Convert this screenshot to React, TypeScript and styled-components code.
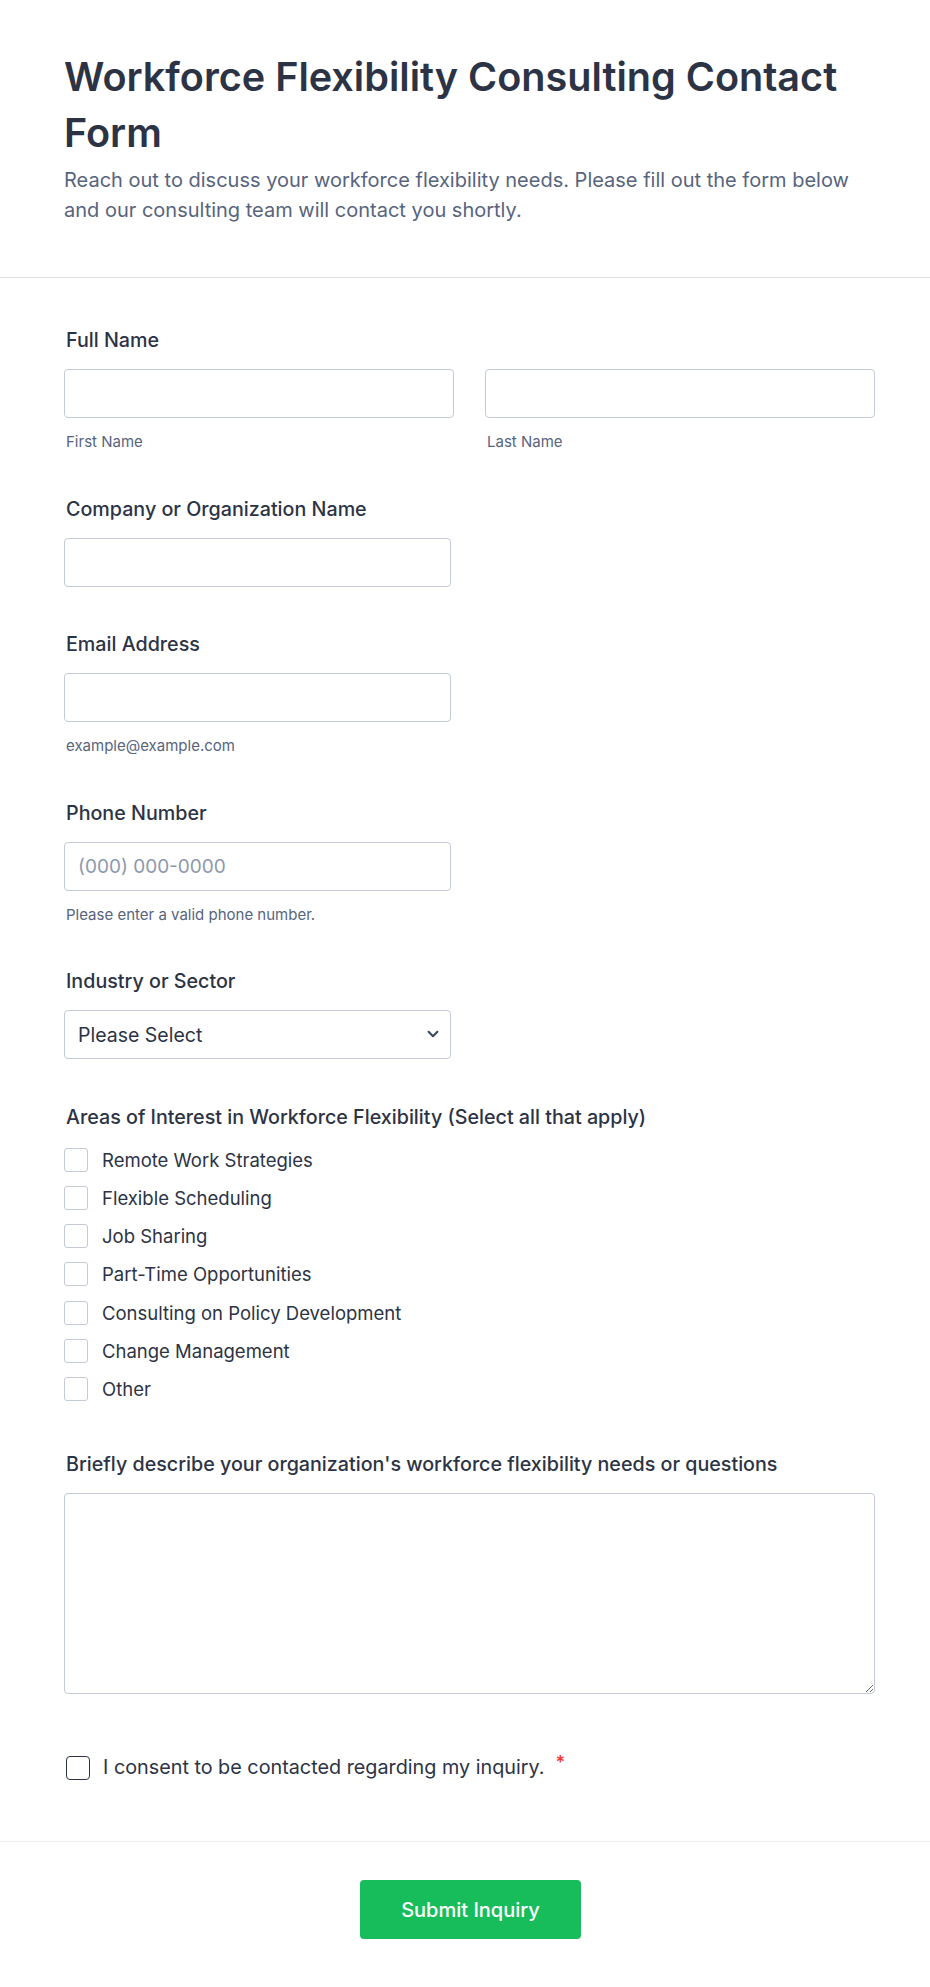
import styled, { createGlobalStyle } from 'styled-components'

const GlobalStyle = createGlobalStyle`
	* {
		box-sizing: border-box;
	}

	body {
		margin: 0;
		background: #ffffff;
		font-family: Inter, 'Noto Sans', sans-serif;
		color: #2c3345;
	}
`

const Page = styled.div`
	width: 930px;
	background: #ffffff;
`

const Header = styled.header`
	padding: 49px 55px 52px 64px;
	border-bottom: 1px solid #dcdfe6;
`

const Title = styled.h1`
	margin: 0;
	font-size: 39.6px;
	line-height: 56px;
	font-weight: 600;
	color: #2c3345;
`

const Subtitle = styled.p`
	max-width: 800px;
	margin: 4px 0 0;
	font-size: 20px;
	line-height: 30px;
	color: #57647e;
`

const FormBody = styled.form`
	display: flex;
	flex-direction: column;
	gap: 45.5px;
	padding: 50px 55px 61px 64px;
	border-bottom: 1px solid #eaecf1;
`

const Field = styled.div`
	display: flex;
	flex-direction: column;
`

const Label = styled.label`
	display: block;
	padding-left: 2px;
	margin-bottom: 17px;
	font-size: 19.7px;
	line-height: 24px;
	font-weight: 500;
	color: #2c3345;
`

const Row = styled.div`
	display: grid;
	grid-template-columns: 1fr 1fr;
	column-gap: 31px;
`

const Cell = styled.div`
	display: flex;
	flex-direction: column;
`

const Input = styled.input<{ $half?: boolean }>`
	width: ${p => (p.$half ? '387px' : '100%')};
	height: 49px;
	padding: 0 13px;
	border: 1px solid #c3cad8;
	border-radius: 4px;
	background: #ffffff;
	font-family: Inter, sans-serif;
	font-size: 19px;
	color: #2c3345;
	outline: none;

	&::placeholder {
		color: #8d98ae;
	}
`

const Hint = styled.span`
	display: block;
	margin-top: 15px;
	padding-left: 2px;
	font-size: 15px;
	line-height: 18px;
	color: #57647e;
`

const SelectWrap = styled.div`
	position: relative;
	width: 387px;
`

const Select = styled.select`
	width: 100%;
	height: 49px;
	padding: 0 36px 0 13px;
	border: 1px solid #c3cad8;
	border-radius: 4px;
	background: #ffffff;
	font-family: Inter, sans-serif;
	font-size: 19.5px;
	color: #2c3345;
	appearance: none;
	outline: none;
`

const Chevron = styled.svg`
	position: absolute;
	right: 12px;
	top: 20px;
	pointer-events: none;
`

const CheckList = styled.div`
	display: flex;
	flex-direction: column;
	gap: 14.3px;
	margin-top: 2px;
	padding-bottom: 5px;
`

const CheckRow = styled.label`
	display: flex;
	align-items: center;
	gap: 14px;
	font-size: 18.5px;
	line-height: 24px;
	color: #2c3345;
`

const Box = styled.input<{ $strong?: boolean }>`
	appearance: none;
	flex: none;
	margin: 0;
	width: 24px;
	height: 24px;
	border: ${p => (p.$strong ? '1.5px solid #2c3345' : '1px solid #c3cad8')};
	border-radius: ${p => (p.$strong ? '4px' : '3px')};
	background: #ffffff;
`

const TextArea = styled.textarea`
	width: 100%;
	height: 201px;
	padding: 12px 13px;
	border: 1px solid #c3cad8;
	border-radius: 4px;
	font-family: Inter, sans-serif;
	font-size: 18px;
	color: #2c3345;
	resize: vertical;
	outline: none;
`

const Consent = styled.label`
	display: flex;
	align-items: center;
	gap: 13px;
	margin-top: 16px;
	padding-left: 2px;
	font-size: 19.8px;
	line-height: 25px;
	color: #2c3345;
`

const Required = styled.span`
	align-self: flex-start;
	margin-left: -2px;
	margin-top: -5px;
	font-size: 18px;
	font-weight: 600;
	color: #f23a3c;
`

const Footer = styled.footer`
	display: flex;
	justify-content: center;
	padding: 38px 53px 50px 64px;
`

const SubmitButton = styled.button`
	width: 221px;
	height: 59px;
	border: none;
	border-radius: 4px;
	background: #18bd5b;
	font-family: Inter, sans-serif;
	font-size: 20px;
	font-weight: 500;
	color: #ffffff;
	cursor: pointer;
`

const interests = [
	'Remote Work Strategies',
	'Flexible Scheduling',
	'Job Sharing',
	'Part-Time Opportunities',
	'Consulting on Policy Development',
	'Change Management',
	'Other',
]

function App() {
	return (
		<Page>
			<GlobalStyle />
			<Header>
				<Title>Workforce Flexibility Consulting Contact Form</Title>
				<Subtitle>
					Reach out to discuss your workforce flexibility needs. Please fill out
					the form below and our consulting team will contact you shortly.
				</Subtitle>
			</Header>

			<FormBody onSubmit={e => e.preventDefault()}>
				<Field>
					<Label>Full Name</Label>
					<Row>
						<Cell>
							<Input type='text' />
							<Hint>First Name</Hint>
						</Cell>
						<Cell>
							<Input type='text' />
							<Hint>Last Name</Hint>
						</Cell>
					</Row>
				</Field>

				<Field>
					<Label>Company or Organization Name</Label>
					<Input type='text' $half />
				</Field>

				<Field>
					<Label>Email Address</Label>
					<Input type='email' $half />
					<Hint>example@example.com</Hint>
				</Field>

				<Field>
					<Label>Phone Number</Label>
					<Input type='tel' $half placeholder='(000) 000-0000' />
					<Hint>Please enter a valid phone number.</Hint>
				</Field>

				<Field>
					<Label>Industry or Sector</Label>
					<SelectWrap>
						<Select defaultValue=''>
							<option value=''>Please Select</option>
						</Select>
						<Chevron width='12' height='8' viewBox='0 0 12 8' fill='none'>
							<path
								d='M1.6 1.8 6 6.2l4.4-4.4'
								stroke='#3f4a61'
								strokeWidth='2.2'
								strokeLinecap='round'
								strokeLinejoin='round'
							/>
						</Chevron>
					</SelectWrap>
				</Field>

				<Field>
					<Label>Areas of Interest in Workforce Flexibility (Select all that apply)</Label>
					<CheckList>
						{interests.map(item => (
							<CheckRow key={item}>
								<Box type='checkbox' />
								{item}
							</CheckRow>
						))}
					</CheckList>
				</Field>

				<Field>
					<Label>Briefly describe your organization's workforce flexibility needs or questions</Label>
					<TextArea />
				</Field>

				<Consent>
					<Box type='checkbox' $strong />
					I consent to be contacted regarding my inquiry.
					<Required>*</Required>
				</Consent>
			</FormBody>

			<Footer>
				<SubmitButton type='submit'>Submit Inquiry</SubmitButton>
			</Footer>
		</Page>
	)
}

export default App
